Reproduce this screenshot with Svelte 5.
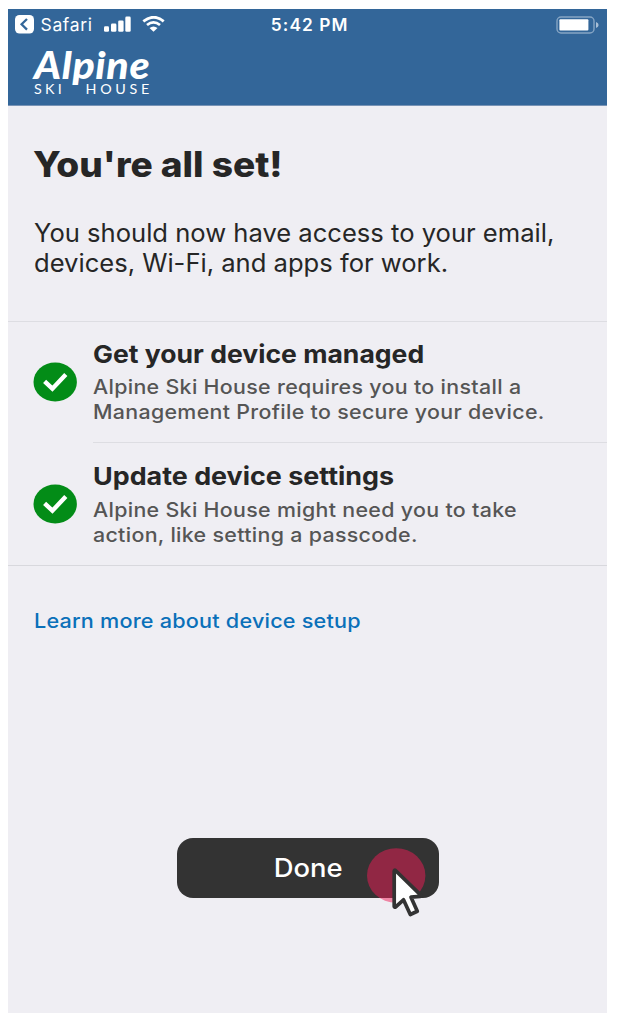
<script>
  const steps = [
    {
      title: 'Get your device managed',
      lines: ['Alpine Ski House requires you to install a', 'Management Profile to secure your device.'],
      wide: false
    },
    {
      title: 'Update device settings',
      lines: ['Alpine Ski House might need you to take', 'action, like setting a passcode.'],
      wide: true
    }
  ];
</script>

<div class="phone">
  <header>
    <div class="status">
      <div class="left">
        <svg width="19" height="19" viewBox="0 0 19 19">
          <rect width="19" height="18.5" rx="4.5" fill="#fff" />
          <path d="M12 4 6.6 9.3l5.4 5.3" fill="none" stroke="#336699" stroke-width="2.3" />
        </svg>
        <span class="safari">Safari</span>
        <svg class="bars" width="28" height="17" viewBox="0 0 28 17" fill="#fff">
          <rect x="0" y="10.2" width="5" height="5.6" rx="1.3" />
          <rect x="7" y="7.5" width="5.4" height="8.3" rx="1.3" />
          <rect x="14.2" y="4.4" width="5.4" height="11.4" rx="1.3" />
          <rect x="21.3" y="0.6" width="5.4" height="15.2" rx="1.3" />
        </svg>
        <svg class="wifi" width="24" height="17" viewBox="0 0 24 17">
          <path d="M1.3 5.4Q12-2.9 21.7 5.4M5 9Q11.5 3.8 18 9" fill="none" stroke="#fff" stroke-width="2.8" />
          <path d="M7.5 12Q11.5 8.8 15.5 12L11.5 15.8Z" fill="#fff" />
        </svg>
      </div>
      <span class="time">5:42 PM</span>
      <svg class="battery" width="43" height="18" viewBox="0 0 43 18">
        <rect x="1" y="1" width="37" height="16" rx="4" fill="none" stroke="#86a5c4" stroke-width="1.4" />
        <rect x="3.4" y="3.2" width="29" height="11.2" rx="1" fill="#fff" />
        <path d="M40 6q2.6 .8 2.6 3t-2.6 3z" fill="#a9bfd6" />
      </svg>
    </div>
    <div class="brand">
      <span class="script">Alpine</span>
      <span class="caps"><span>SKI</span><span>HOUSE</span></span>
    </div>
  </header>

  <section class="intro">
    <h1>You're all set!</h1>
    <p>You should now have access to your email,<br />devices, Wi-Fi, and apps for work.</p>
  </section>

  <ul>
    {#each steps as step}
      <li>
        <svg class="check" width="44" height="40" viewBox="0 0 44 40">
          <ellipse cx="22.2" cy="20" rx="21.7" ry="19.6" fill="#038c17" />
          <path d="M11.6 19.3l7.8 7.4L32.8 12.6" fill="none" stroke="#fff" stroke-width="4.4" />
        </svg>
        <div class="body">
          <h2 class:wide={step.wide}>{step.title}</h2>
          <p>
            {#each step.lines as line}
              <span class="line">{line}</span>
            {/each}
          </p>
        </div>
      </li>
    {/each}
  </ul>

  <a class="learn" href="#setup">Learn more about device setup</a>

  <div class="action">
    <button><span>Done</span></button>
    <svg class="pointer" width="62" height="70" viewBox="0 0 62 70">
      <ellipse cx="29.2" cy="27.5" rx="29.2" ry="27.3" fill="#f01b55" fill-opacity=".5" />
      <path d="M27.2 23.4V58.2q.2 1.5 1.5.7L36.5 51.8 43.3 66.5 50.3 63.3 44 49.2 53.3 48.4q1.2-.5.2-1.5L28.5 22.5q-1.1-.8-1.3.9Z" fill="#fff" stroke="#333" stroke-width="3.7" stroke-linejoin="round" />
    </svg>
  </div>
</div>

<style>
  :global(body) { margin: 0; background: #fff; }
  .phone {
    box-sizing: border-box;
    width: 599px;
    height: 1004px;
    margin: 9px 0 0 8px;
    background: #efeef3;
    color: #262626;
    font-family: Inter, "Liberation Sans", sans-serif;
    display: flex;
    flex-direction: column;
    white-space: nowrap;
  }
  header { height: 97px; flex: none; background: #336699; color: #fff; box-sizing: border-box; border-bottom: 1px solid #7893b5; }
  .status { display: grid; grid-template-columns: 1fr auto 1fr; height: 31px; align-items: center; padding: 0 8px 0 6.5px; }
  .left { display: flex; align-items: center; }
  .safari { font-size: 17.5px; margin-left: 7px; letter-spacing: .65px; width: 63.5px; }
  .wifi { margin-left: 9.5px; }
  .time { font-size: 17.3px; font-weight: 600; letter-spacing: 1.1px; padding-left: 6px; }
  .battery { justify-self: end; }
  .brand { width: 118px; margin: 6px 0 0 26px; display: flex; flex-direction: column; }
  .script { font: italic 900 37px/38px Lato, sans-serif; letter-spacing: .6px; transform: scaleX(1.11); transform-origin: left; width: max-content; }
  .caps { display: flex; justify-content: space-between; margin-top: -2px; font: 400 14.3px/14px Lato, sans-serif; letter-spacing: 3.3px; }
  .caps span:last-child { letter-spacing: 3.7px; margin-right: -1px; }
  .intro { padding: 34px 26px 0; height: 215px; box-sizing: border-box; }
  h1, h2, p, ul { margin: 0; padding: 0; }
  h1, h2, .intro p, .line, .learn { width: max-content; transform-origin: left; }
  h1 { font-size: 34.9px; line-height: 48px; font-weight: 800; margin-left: -1px; transform: scaleX(1.062); }
  .intro p { margin-top: 30px; font-size: 25px; line-height: 30px; transform: scaleX(1.023); }
  ul { list-style: none; border-top: 1px solid #dddde2; border-bottom: 1px solid #d8d8dd; }
  li { display: flex; align-items: center; padding-left: 25px; }
  .check { margin-top: -2px; }
  li:last-child .check { margin-top: 0; }
  .body { flex: 1; margin-left: 16px; height: 121px; padding-top: 16px; box-sizing: border-box; }
  li:not(:last-child) .body { border-bottom: 1px solid #dddde2; }
  li:last-child .body { height: 122px; padding-top: 17px; }
  h2 { font-size: 24.7px; line-height: 32px; font-weight: 700; transform: scaleX(1.076); }
  h2.wide { transform: scaleX(1.089); }
  .body p { margin-top: 5px; font-size: 19.8px; line-height: 25px; font-weight: 500; color: #555; }
  li:last-child .body p { margin-top: 6px; }
  .line { display: block; letter-spacing: .3px; transform: scaleX(1.08); }
  .learn { align-self: flex-start; margin: 39px 0 0 26px; font-size: 20px; line-height: 32px; font-weight: 500; letter-spacing: .2px; color: #0a70b9; text-decoration: none; transform: scaleX(1.08); }
  .action { position: relative; width: 262px; height: 60px; margin: 201px 0 0 169px; }
  button { display: block; width: 100%; height: 100%; border: 0; border-radius: 16px; background: #333; color: #fff; font: 500 25.6px Inter, sans-serif; padding: 0 0 2px; }
  button span { display: inline-block; transform: scaleX(1.07); }
  .pointer { position: absolute; left: 190px; top: 10px; }
</style>
